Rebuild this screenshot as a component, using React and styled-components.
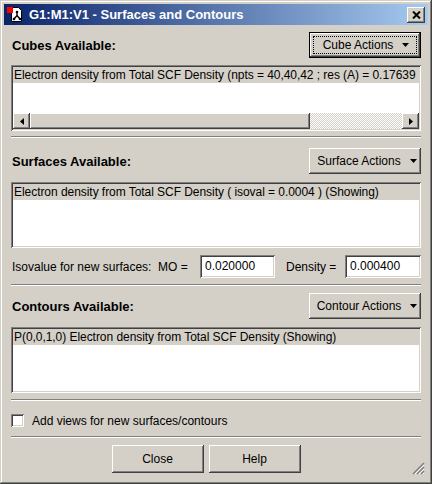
import React from "react";
import styled, { createGlobalStyle, css } from "styled-components";

const GlobalStyle = createGlobalStyle`
  html, body {
    margin: 0;
    padding: 0;
    background: #d4d0c8;
  }
  body {
    font-family: "Liberation Sans", Arial, sans-serif;
    font-size: 12px;
    color: #000;
  }
`;

const raised = css`
  box-shadow: inset -1px -1px #404040, inset 1px 1px #ffffff,
    inset -2px -2px #808080, inset 2px 2px #d4d0c8;
`;

const sunken = css`
  box-shadow: inset 1px 1px #808080, inset -1px -1px #ffffff,
    inset 2px 2px #404040, inset -2px -2px #d4d0c8;
`;

const Window = styled.div`
  position: relative;
  width: 432px;
  height: 484px;
  box-sizing: border-box;
  padding: 4px;
  background: #d4d0c8;
  box-shadow: inset -1px -1px #404040, inset 1px 1px #d4d0c8,
    inset -2px -2px #808080, inset 2px 2px #ffffff;
  display: flex;
  flex-direction: column;
`;

const TitleBar = styled.div`
  height: 21px;
  display: flex;
  align-items: center;
  padding: 0 3px;
  background: linear-gradient(to right, #0a246a, #a6caf0);
`;

const Title = styled.div`
  flex: 1;
  margin-left: 5px;
  color: #fff;
  font-weight: bold;
  font-size: 13px;
  white-space: nowrap;
`;

const CloseBox = styled.div`
  width: 18px;
  height: 16px;
  background: #d4d0c8;
  display: flex;
  align-items: center;
  justify-content: center;
  ${raised};
`;

const Body = styled.div`
  flex: 1;
  display: flex;
  flex-direction: column;
  padding: 7px;
`;

const HeadRow = styled.div`
  display: flex;
  align-items: center;
  justify-content: space-between;
  height: 26px;
  margin-top: ${(p) => p.$top || 0}px;
`;

const Heading = styled.div`
  font-weight: bold;
  font-size: 13px;
  padding-left: 1px;
`;

const ActionButton = styled.div`
  position: relative;
  width: 112px;
  height: 26px;
  box-sizing: border-box;
  display: flex;
  align-items: center;
  justify-content: center;
  gap: 9px;
  padding-left: ${(p) => (p.$default ? 2 : 4)}px;
  background: #d4d0c8;
  ${raised};
  ${(p) =>
    p.$default &&
    css`
      border: 1px solid #000;
      &::after {
        content: "";
        position: absolute;
        inset: 3px;
        border: 1px dotted #000;
      }
    `}
`;

const ListBox = styled.div`
  height: 66px;
  margin-top: ${(p) => p.$top || 0}px;
  box-sizing: border-box;
  padding: 2px;
  background: #fff;
  display: flex;
  flex-direction: column;
  overflow: hidden;
  ${sunken};
`;

const ListRow = styled.div`
  height: 16px;
  line-height: 16px;
  padding: 0 1px;
  white-space: nowrap;
  overflow: hidden;
  letter-spacing: -0.05px;
  background: ${(p) => (p.$selected ? "#d4d0c8" : "transparent")};
`;

const HScroll = styled.div`
  margin-top: auto;
  height: 16px;
  display: flex;
`;

const ScrollArrow = styled.div`
  width: 17px;
  height: 16px;
  display: flex;
  align-items: center;
  justify-content: center;
  background: #d4d0c8;
  ${raised};
`;

const ScrollThumb = styled.div`
  width: 280px;
  height: 16px;
  background: #d4d0c8;
  ${raised};
`;

const ScrollTrack = styled.div`
  flex: 1;
  background-color: #eeece8;
  background-image: repeating-conic-gradient(#ffffff 0 25%, #d4d0c8 0 50%);
  background-size: 2px 2px;
`;

const Separator = styled.div`
  margin-top: ${(p) => p.$top || 0}px;
  border-top: 1px solid #808080;
  border-bottom: 1px solid #ffffff;
`;

const IsoRow = styled.div`
  margin-top: 7px;
  height: 23px;
  display: flex;
  align-items: center;
`;

const IsoLabel = styled.div`
  width: ${(p) => p.$w}px;
  margin-left: ${(p) => p.$left || 0}px;
  padding-left: ${(p) => p.$pad || 0}px;
  box-sizing: border-box;
  white-space: pre;
`;

const ValueBox = styled.div`
  width: ${(p) => p.$w}px;
  height: 23px;
  box-sizing: border-box;
  padding: 0 5px;
  line-height: 23px;
  background: #fff;
  ${sunken};
`;

const CheckRow = styled.div`
  margin-top: 12px;
  height: 15px;
  display: flex;
  align-items: center;
  gap: 8px;
`;

const CheckBox = styled.div`
  width: 13px;
  height: 13px;
  background: #fff;
  ${sunken};
`;

const Footer = styled.div`
  margin-top: 7px;
  display: flex;
  justify-content: center;
  gap: 5px;
  padding-right: 20px;
`;

const PushButton = styled.div`
  width: 92px;
  height: 28px;
  display: flex;
  align-items: center;
  justify-content: center;
  background: #d4d0c8;
  ${raised};
`;

const Grip = styled.svg`
  position: absolute;
  right: 7px;
  bottom: 9px;
`;

const Caret = () => (
  <svg width="7" height="4" viewBox="0 0 7 4">
    <path d="M0 0h7L3.5 4z" fill="#000" />
  </svg>
);

const AppIcon = () => (
  <svg width="17" height="17" viewBox="0 0 17 17">
    <path d="M4.5 1.5h7l3 3v11h-10z" fill="#fff" stroke="#000" />
    <rect x="0" y="1" width="6" height="6" fill="#ff0000" />
    <path d="M10 6v3.5M10 9.5l-3 3.5M10 9.5l3 3.5" stroke="#000" strokeWidth="1.4" fill="none" />
    <circle cx="10" cy="6" r="1.3" fill="#000" />
    <circle cx="7" cy="13" r="1.3" fill="#000" />
    <circle cx="13" cy="13" r="1.3" fill="#000" />
  </svg>
);

const CloseGlyph = () => (
  <svg width="9" height="8" viewBox="0 0 9 8">
    <path d="M1 0.5l7 7M8 0.5l-7 7" stroke="#000" strokeWidth="2" />
  </svg>
);

const ArrowGlyph = ({ dir }) => (
  <svg width="4" height="7" viewBox="0 0 4 7">
    <path d={dir === "left" ? "M4 0v7L0 3.5z" : "M0 0v7l4-3.5z"} fill="#000" />
  </svg>
);

const Section = ({ title, action, isDefault, top, listTop, children }) => (
  <>
    <HeadRow $top={top}>
      <Heading>{title}</Heading>
      <ActionButton $default={isDefault}>
        <span>{action}</span>
        <Caret />
      </ActionButton>
    </HeadRow>
    <ListBox $top={listTop}>{children}</ListBox>
  </>
);

export default function App() {
  return (
    <>
      <GlobalStyle />
      <Window>
        <TitleBar>
          <AppIcon />
          <Title>G1:M1:V1 - Surfaces and Contours</Title>
          <CloseBox>
            <CloseGlyph />
          </CloseBox>
        </TitleBar>
        <Body>
          <Section title="Cubes Available:" action="Cube Actions" isDefault listTop={7}>
            <ListRow $selected>
              Electron density from Total SCF Density (npts = 40,40,42 ; res (A) = 0.17639
            </ListRow>
            <HScroll>
              <ScrollArrow>
                <ArrowGlyph dir="left" />
              </ScrollArrow>
              <ScrollThumb />
              <ScrollTrack />
              <ScrollArrow>
                <ArrowGlyph dir="right" />
              </ScrollArrow>
            </HScroll>
          </Section>
          <Separator $top={5} />
          <Section title="Surfaces Available:" action="Surface Actions" top={10} listTop={8}>
            <ListRow $selected>
              Electron density from Total SCF Density ( isoval = 0.0004 ) (Showing)
            </ListRow>
          </Section>
          <IsoRow>
            <IsoLabel $w={189} $pad={1}>{"Isovalue for new surfaces:  MO ="}</IsoLabel>
            <ValueBox $w={75}>0.020000</ValueBox>
            <IsoLabel $w={59} $left={11}>Density =</IsoLabel>
            <ValueBox $w={76}>0.000400</ValueBox>
          </IsoRow>
          <Separator $top={6} />
          <Section title="Contours Available:" action="Contour Actions" top={7} listTop={8}>
            <ListRow $selected>P(0,0,1,0) Electron density from Total SCF Density (Showing)</ListRow>
          </Section>
          <Separator $top={6} />
          <CheckRow>
            <CheckBox />
            <span>Add views for new surfaces/contours</span>
          </CheckRow>
          <Separator $top={8} />
          <Footer>
            <PushButton>Close</PushButton>
            <PushButton>Help</PushButton>
          </Footer>
        </Body>
        <Grip width="13" height="13" viewBox="0 0 13 13">
          <path d="M12 1L1 12M12 5L5 12M12 9L9 12" stroke="#808080" strokeWidth="1.5" />
          <path d="M12 3L3 12M12 7L7 12M12 11L11 12" stroke="#ffffff" strokeWidth="1" />
        </Grip>
      </Window>
    </>
  );
}
